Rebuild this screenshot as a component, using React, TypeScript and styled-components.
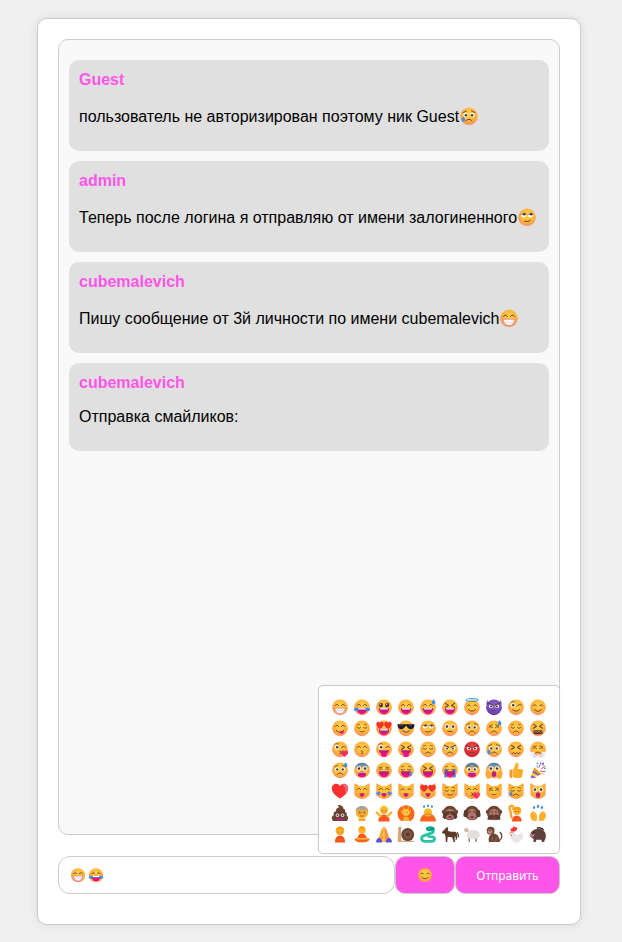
import React, { useId } from "react";
import styled, { createGlobalStyle } from "styled-components";

const Global = createGlobalStyle`
  html, body { margin: 0; padding: 0; background: #f0f0f0; }
  body { font-family: "Liberation Sans", Arial, sans-serif; }
`;

const Page = styled.div`
  box-sizing: border-box;
  width: 622px;
  height: 942px;
  padding: 18px 41px 17px 37px;
  background: #f0f0f0;
`;
const Card = styled.main`
  box-sizing: border-box;
  height: 907px;
  display: flex;
  flex-direction: column;
  padding: 20px 20px 30px;
  background: #fff;
  border: 1px solid #ccc;
  border-radius: 10px;
  box-shadow: 0 0 10px rgba(0, 0, 0, 0.1);
`;
const Chat = styled.section`
  box-sizing: border-box;
  flex: 1;
  display: flex;
  flex-direction: column;
  gap: 10px;
  padding: 20px 10px;
  background: #f9f9f9;
  border: 1px solid #ccc;
  border-radius: 10px;
`;
const Message = styled.article`
  padding: 11px 10px 9px;
  background: #e0e0e0;
  border-radius: 10px;
`;
const Author = styled.strong`
  display: block;
  font-size: 16px;
  line-height: 18px;
  color: #ff55e8;
`;
const Body = styled.p`
  margin: 16px 0;
  font-size: 16px;
  color: #000;
`;
const InlineEmoji = styled.span`
  display: inline-block;
  width: 20px;
  height: 21px;
  vertical-align: -4px;
  svg { display: block; margin-top: 1px; }
`;
const Composer = styled.form`
  position: relative;
  display: flex;
  height: 38px;
  margin: 21px 0 0;
`;
const Field = styled.div`
  box-sizing: border-box;
  width: 337px;
  display: flex;
  align-items: center;
  gap: 2px;
  padding: 0 11px;
  background: #fff;
  border: 1px solid #ccc;
  border-radius: 12px;
`;
const PinkButton = styled.button<{ $w: number }>`
  box-sizing: border-box;
  width: ${(p) => p.$w}px;
  height: 38px;
  display: flex;
  align-items: center;
  justify-content: center;
  padding: 0;
  background: #ff55e8;
  border: 1px solid #cfc6cd;
  border-radius: 10px;
  color: #fff;
  font-family: "Noto Sans", sans-serif;
  font-size: 12px;
`;
const Picker = styled.div`
  position: absolute;
  right: 0;
  bottom: calc(100% + 2px);
  box-sizing: border-box;
  width: 242px;
  height: 169px;
  display: grid;
  grid-template-columns: repeat(10, 22px);
  grid-auto-rows: 21.2px;
  padding: 10px;
  background: #fff;
  border: 1px solid #ccc;
  border-radius: 5px;
  place-items: center;
  box-shadow: 0 0 2px rgba(0, 0, 0, 0.08);
`;

const DK = "#53373A";
const S = (d: string, w = 1.6, c = DK) => (
  <path d={d} fill="none" stroke={c} strokeWidth={w} strokeLinecap="round" strokeLinejoin="round" />
);
const eyeO = (x: number, y: number, r = 3.6, px = 0, py = 0) => (
  <>
    <circle cx={x} cy={y} r={r} fill="#fff" />
    <circle cx={x + px} cy={y + py} r={r * 0.58} fill={DK} />
  </>
);
const heart = (x: number, y: number, s: number, c = "#F8312F") => (
  <path
    transform={`translate(${x} ${y}) scale(${s})`}
    d="M0 5C-3.5 2.6-5 1-5-1.3-5-3.2-3.6-4.5-2.2-4.5-1.2-4.5-.4-4-0-3 .4-4 1.2-4.5 2.2-4.5 3.6-4.5 5-3.2 5-1.3 5 1 3.5 2.6 0 5Z"
    fill={c}
  />
);
const drop = (x: number, y: number, s = 1) => (
  <path
    transform={`translate(${x} ${y}) scale(${s})`}
    d="M0-4C1.8-1.5 2.6-.4 2.6 1 2.6 2.5 1.4 3.5 0 3.5S-2.6 2.5-2.6 1C-2.6-.4-1.8-1.5 0-4Z"
    fill="#3F8CF0"
  />
);
const mouthShape = "M7 18H25C25.5 23.5 21 28 16 28S6.5 23.5 7 18Z";

const parts: Record<string, React.ReactNode> = {
  eHappy: <>{S("M7.5 13.5C8.5 10.5 12.5 10.5 13.5 13.5")}{S("M18.5 13.5C19.5 10.5 23.5 10.5 24.5 13.5")}</>,
  eSoft: <>{S("M7 14C8.5 11.5 12 11.5 13.5 14", 1.4)}{S("M18.5 14C20 11.5 23.5 11.5 25 14", 1.4)}</>,
  eBig: <>
    <ellipse cx="10.5" cy="12.5" rx="3.8" ry="4.2" fill={DK} /><ellipse cx="21.5" cy="12.5" rx="3.8" ry="4.2" fill={DK} />
    <circle cx="9.5" cy="11" r="1.2" fill="#fff" /><circle cx="20.5" cy="11" r="1.2" fill="#fff" />
  </>,
  eCross: <>{S("M8 9.5L13.5 13 8 16.5", 1.8)}{S("M24 9.5L18.5 13 24 16.5", 1.8)}</>,
  eDown: <>{S("M7.5 15C9 17 12 17 13.5 15", 1.4)}{S("M18.5 15C20 17 23 17 24.5 15", 1.4)}{S("M8 10.5L12 9.5", 1.1)}{S("M24 10.5L20 9.5", 1.1)}</>,
  eWink: <>{eyeO(10.5, 13, 4, 0.5, 0)}{S("M7 7.5C8.5 6 11 6 13 7", 1.2)}{S("M18.5 14C20 11 24 11 25.5 13", 1.6)}</>,
  eSide: <>
    {eyeO(10.5, 13, 3.8, 1, -1.5)}{eyeO(21.5, 13, 3.8, 1, -1.5)}
    {S("M6.5 11.5H14", 1.1)}{S("M17.5 11.5H25", 1.1)}
  </>,
  eStare: <>{eyeO(10.5, 13.5, 4, 0, 0)}{eyeO(21.5, 13.5, 4, 0, 0)}</>,
  eWorry: <>{eyeO(10.5, 14.5, 3.6, 0.6, 0.4)}{eyeO(21.5, 14.5, 3.6, -0.6, 0.4)}{S("M6.5 10.5L12 8", 1.3)}{S("M25.5 10.5L20 8", 1.3)}</>,
  eAngry: <>{eyeO(10.5, 14.5, 3.4, 0.4, 0.6)}{eyeO(21.5, 14.5, 3.4, -0.4, 0.6)}{S("M6.5 9.5L14 13", 1.8)}{S("M25.5 9.5L18 13", 1.8)}</>,
  eWeary: <>{S("M7.5 12.5L13 10.5", 1.4)}{S("M24.5 12.5L19 10.5", 1.4)}{S("M8 15C9.5 13.5 12 13.5 13.5 15", 1.3)}{S("M18.5 15C20 13.5 22.5 13.5 24 15", 1.3)}</>,
  mTeeth: <><path d={mouthShape} fill="#fff" stroke="#D15C9D" strokeWidth="1" />{S("M8 22.5H24", 0.7, "#B9B4BA")}{S("M12 18V27M16 18V28M20 18V27", 0.5, "#CFCBD0")}</>,
  mOpen: <><path d={mouthShape} fill="#BB1D80" /><path d="M9 18H23V19.5C23 20.2 22.4 20.5 22 20.5H10C9.6 20.5 9 20.2 9 19.5Z" fill="#fff" /><path d="M10 26C12 23.6 20 23.6 22 26 20.5 27.4 18.4 28 16 28S11.5 27.4 10 26Z" fill="#F70A8D" /></>,
  mOpenDeep: <><path d={mouthShape} fill="#BB1D80" /><path d="M10 26C12 23.6 20 23.6 22 26 20.5 27.4 18.4 28 16 28S11.5 27.4 10 26Z" fill="#F70A8D" /></>,
  mCat: <><path d="M11.5 20H20.5C20.5 24 18.4 26 16 26S11.5 24 11.5 20Z" fill="#BB1D80" /><path d="M13 24.5C14.5 23.4 17.5 23.4 19 24.5 17.5 26.3 14.5 26.3 13 24.5Z" fill="#F70A8D" /></>,
  mSmile: <>{S("M10 20.5C12 24.5 20 24.5 22 20.5")}</>,
  mSmall: <>{S("M12 21.5C14 23.5 18 23.5 20 21.5", 1.4)}</>,
  mSmirk: <>{S("M12 22.5C15 24 20 23.5 22 20.5", 1.5)}</>,
  mFlat: <>{S("M12 22H20", 1.6)}</>,
  mFrown: <>{S("M11 24C13 20.5 19 20.5 21 24", 1.5)}</>,
  mYum: <>{S("M9 19.5C11 24.5 20 25 23 19.5")}<path d="M16 22.5C18 21.5 21 21 22.5 21.5 23.5 24 21.5 26.5 19.5 26.5 17.5 26.5 16 24.5 16 22.5Z" fill="#F70A8D" /></>,
  mTongue: <><path d="M7 18H25C25 22 21 25 16 25S7 22 7 18Z" fill="#BB1D80" /><path d="M11 22H21V26C21 28.5 19 30 16 30S11 28.5 11 26Z" fill="#F70A8D" /></>,
  mKiss: <>{S("M14.5 19.5C17.5 19 18 21.5 16 22 18 22.5 17.5 25 14.5 24.5", 1.5)}</>,
  mGrit: <><path d="M8 20H24V25C24 26 23 27 22 27H10C9 27 8 26 8 25Z" fill={DK} />{S("M9.5 23.5L12.3 21.5 15 24 17.8 21.5 20.5 24 23 21.5", 1.1, "#FFB02E")}</>,
  mWavy: <>{S("M9 25L12 22 14.5 25 17.5 22 20 25 23 22", 1.5)}</>,
  mGasp: <><path d="M9 25C9 20.5 12 18.5 16 18.5S23 20.5 23 25C23 27.5 20 28.5 16 28.5S9 27.5 9 25Z" fill="#BB1D80" /><path d="M11 19.5H21V20.5H11Z" fill="#fff" /><path d="M11 26.5C13 24.5 19 24.5 21 26.5 19 28.5 13 28.5 11 26.5Z" fill="#F70A8D" /></>,
  mO: <><ellipse cx="16" cy="23" rx="4" ry="5" fill="#BB1D80" /></>,
  xSweat: drop(26, 7, 1.2),
  xDrop: drop(7, 21, 1.1),
  xTearSide: drop(24.5, 23, 1),
  xTears: <>
    <path d="M1 20.5C3 17.5 7 16.5 10 18L8 23C6 24 2.5 23.5 1 20.5Z" fill="#3F8CF0" />
    <path d="M31 20.5C29 17.5 25 16.5 22 18L24 23C26 24 29.5 23.5 31 20.5Z" fill="#3F8CF0" />
  </>,
  xHalo: <ellipse cx="16" cy="3.5" rx="10.5" ry="2.6" fill="none" stroke="#2C9CE8" strokeWidth="1.8" />,
  xHeartEyes: <>{heart(9, 11, 1.35)}{heart(23, 11, 1.35)}</>,
  xShades: <>
    <path d="M1 9.5H31V11.5C31 15.5 27.5 18 24 18 20.5 18 18 15.5 17.5 13H14.5C14 15.5 11.5 18 8 18 4.5 18 1 15.5 1 11.5Z" fill="#1F1A2E" />
    <path d="M4 11.5C5.5 10.5 8 10.5 9.5 11.5M21 11.5C22.5 10.5 25 10.5 26.5 11.5" stroke="#6D6A90" strokeWidth="1.2" fill="none" />
  </>,
  xHeartKiss: heart(24, 24, 1.25, "#F92F60"),
  xSteam: <>
    <circle cx="6" cy="25" r="4" fill="#F3EEF8" /><circle cx="26" cy="25" r="4" fill="#F3EEF8" />
    <circle cx="10" cy="28" r="3.5" fill="#E8D6F5" /><circle cx="22" cy="28" r="3.5" fill="#E8D6F5" />
    <circle cx="16" cy="29" r="2.6" fill="#F3EEF8" />
  </>,
  xStreams: <>
    <path d="M6 15H12V27C10 29 8 30 6 29.5Z" fill="#3F8CF0" /><path d="M26 15H20V27C22 29 24 30 26 29.5Z" fill="#3F8CF0" />
  </>,
  xHands: <>
    <path d="M1 21C1 18.5 4 18.5 5 20L9 25V31H4C2 29 1 24 1 21Z" fill="#FFB02E" stroke="#E8832A" strokeWidth=".5" />
    <path d="M31 21C31 18.5 28 18.5 27 20L23 25V31H28C30 29 31 24 31 21Z" fill="#FFB02E" stroke="#E8832A" strokeWidth=".5" />
  </>,
  wisk: <>{S("M1.5 20.5L6 21.5M1.5 24.5L6 24", 0.9, "#F8843A")}{S("M30.5 20.5L26 21.5M30.5 24.5L26 24", 0.9, "#F8843A")}</>,
};

type Spec = { base?: "face" | "red" | "purple" | "cat" | "blue"; p?: string[]; art?: React.ReactNode };
const face = (...p: string[]): Spec => ({ base: "face", p });
const blue = (...p: string[]): Spec => ({ base: "blue", p });
const cat = (...p: string[]): Spec => ({ base: "cat", p: [...p, "wisk"] });

const Person = ({ skin = "#FFB02E", shirt = "#F8541E", hair = "#F59F00" }) => (
  <>
    <path d="M7 31C7 22 11 19 16 19S25 22 25 31Z" fill={shirt} />
    <circle cx="16" cy="11" r="7.5" fill={skin} />
    <path d="M8.5 11C8.5 4 12.5 2.5 16 2.5S23.5 4 23.5 11C21 7.5 18 7 16 7S11 7.5 8.5 11Z" fill={hair} />
    <circle cx="13.5" cy="12.5" r=".9" fill={DK} /><circle cx="18.5" cy="12.5" r=".9" fill={DK} />
  </>
);
const Monkey = ({ cover }: { cover: "eyes" | "ears" | "mouth" }) => (
  <>
    <circle cx="5" cy="14" r="3.6" fill="#6D4534" /><circle cx="27" cy="14" r="3.6" fill="#6D4534" />
    <ellipse cx="16" cy="16" rx="12.5" ry="13" fill="#6D4534" />
    <ellipse cx="16" cy="18" rx="8.5" ry="9.5" fill="#B0756A" />
    <circle cx="12.5" cy="14" r="1.4" fill={DK} /><circle cx="19.5" cy="14" r="1.4" fill={DK} />
    <ellipse cx="16" cy="23" rx="3.5" ry="1.5" fill="#7D2B5E" />
    {cover === "eyes" && <><path d="M3 24C3 16 8 12 15.5 13V18C12 18 8 22 7 27Z" fill="#5D3A2E" /><path d="M29 24C29 16 24 12 16.5 13V18C20 18 24 22 25 27Z" fill="#5D3A2E" /></>}
    {cover === "ears" && <><path d="M1 22C0 16 3 9 9 10 11 14 9 20 6 24Z" fill="#5D3A2E" /><path d="M31 22C32 16 29 9 23 10 21 14 23 20 26 24Z" fill="#5D3A2E" /></>}
    {cover === "mouth" && <><path d="M4 27C5 21 10 18 15.5 19V26C12 28 7 29 4 27Z" fill="#5D3A2E" /><path d="M28 27C27 21 22 18 16.5 19V26C20 28 25 29 28 27Z" fill="#5D3A2E" /></>}
  </>
);

const thumb = (
  <>
    <path d="M13 30H23C25 30 26.5 29 27 27L28.5 18C28.8 15.5 27.2 14 25 14H19.5L20.5 6C20.8 2.5 16.5 1.2 15.2 4.5L12.5 12C12 13.5 11 14.5 10 15.5V27C11 29 12 30 13 30Z" fill="#FFB02E" />
    <path d="M19 18H28M18.5 22.5H27.5M18.5 26.5H26.5" stroke="#F59B1E" strokeWidth=".8" />
    <rect x="4.5" y="15" width="5" height="15" rx="1.8" fill="#F8953A" />
  </>
);
const popper = (
  <>
    <path d="M3 30L9.5 11 22 23Z" fill="#F59F00" />
    <path d="M4.6 25.5L13 29 8 30.5 3 30ZM7.5 17L20 24 16 26 6 21Z" fill="#8D65C5" />
    <path d="M6 21L16 26 13 28 4.6 25.5Z" fill="#FFD23C" />
    <circle cx="24" cy="5" r="1.7" fill="#F92F60" /><circle cx="15" cy="4" r="1.5" fill="#00A6ED" /><circle cx="28" cy="13" r="1.6" fill="#00D26A" />
    <path d="M18 11L21 3M22 14L29 9M20 18L29 19" stroke="#F92F60" strokeWidth="1.5" strokeLinecap="round" />
    <path d="M14 8L16 12M25 9L26 3" stroke="#00A6ED" strokeWidth="1.4" strokeLinecap="round" />
    <path d="M22 22L27 24" stroke="#FFB02E" strokeWidth="1.5" strokeLinecap="round" />
  </>
);
const bigHeart = (
  <>
    <path d="M16 29.5C6 23 1.5 17.5 1.5 11 1.5 6 5.5 3 9.5 3 12.5 3 15 4.8 16 7.5 17 4.8 19.5 3 22.5 3 26.5 3 30.5 6 30.5 11 30.5 17.5 26 23 16 29.5Z" fill="#F8312F" />
    <path d="M22.5 3C26.5 3 30.5 6 30.5 11 30.5 15 28.5 19 25 22.5 27 15 25 7 19 5 20 3.8 21 3 22.5 3Z" fill="#FF6D8D" opacity=".8" />
  </>
);
const poop = (
  <>
    <path d="M4 30C0 27 1 21 5 20 3.5 16 6 13 9 13 8 9 11 6 14 6 14 4 13 3 12 2 17 1 22 4 22 8.5 24.5 9 26 11 25 14 28 15 29 18 27.5 20.5 31 22 31.5 27 28 30Z" fill="#6D4534" />
    <path d="M9 13C13 16 20 16 25 14M5 20C10 24 21 24 27.5 20.5" stroke="#4E3227" strokeWidth="1" fill="none" />
    {eyeO(11.5, 20, 3, 0, 0)}{eyeO(20.5, 20, 3, 0, 0)}
    <path d="M10 25.5H22C21 29 18.5 29.5 16 29.5S11 29 10 25.5Z" fill="#BB1D80" />
  </>
);
const elder = (
  <>
    <circle cx="16" cy="15" r="11" fill="#FFB02E" />
    <path d="M5 14C4 8 9 3.5 16 3.5S28 8 27 14C25 12 25 10 23 9 18 11 13 11 9 9 7 10 7 12 5 14Z" fill="#A9A29A" />
    <circle cx="12" cy="15" r="2.6" fill="none" stroke="#7C7672" strokeWidth=".9" /><circle cx="20" cy="15" r="2.6" fill="none" stroke="#7C7672" strokeWidth=".9" />
    <circle cx="12" cy="15" r="1" fill={DK} /><circle cx="20" cy="15" r="1" fill={DK} />
    {S("M13 21C15 22 17 22 19 21", 1)}
    <path d="M10 26H22V30H10Z" fill="#F59F00" />
  </>
);
const gesture = (
  <>
    <path d="M6 31C6 23 10 19 16 19S26 23 26 31Z" fill="#F8541E" />
    <path d="M3 15L10 22M29 15L22 22" stroke="#FFB02E" strokeWidth="4" strokeLinecap="round" />
    <circle cx="16" cy="11" r="7" fill="#FFB02E" />
    <path d="M9 10C9 5 12 3 16 3S23 5 23 10C21 7 11 7 9 10Z" fill="#F5C518" />
    <circle cx="13.5" cy="12" r=".8" fill={DK} /><circle cx="18.5" cy="12" r=".8" fill={DK} />
  </>
);
const flameHair = (
  <>
    <path d="M16 2C24 2 31 8 31 17 31 24 27 29 24 30H8C5 29 1 24 1 17 1 8 8 2 16 2Z" fill="#F8651E" />
    <path d="M11 5L13 12M21 5L19 12M8 12L11 18M24 12L21 18" stroke="#FFB02E" strokeWidth="2.5" strokeLinecap="round" />
    <circle cx="16" cy="15" r="6" fill="#FFC83D" />
    <circle cx="14" cy="15" r=".8" fill={DK} /><circle cx="18" cy="15" r=".8" fill={DK} />
    <path d="M10 30C10 25 13 22 16 22S22 25 22 30Z" fill="#FFB02E" />
  </>
);
const bowing = (
  <>
    <path d="M2 31C2 22 8 17 16 17S30 22 30 31Z" fill="#F8651E" />
    <circle cx="16" cy="15" r="7" fill="#FFB02E" />
    <path d="M9 14C10 9.5 13 8 16 8S22 9.5 23 14C20 12 12 12 9 14Z" fill="#F5C518" />
    {S("M12 18C13 19 14 19 15 18M17 18C18 19 19 19 20 18", .9)}
    {drop(9, 4, .7)}{drop(16, 3, .7)}{drop(23, 4, .7)}
  </>
);
const raising = (
  <>
    <path d="M9 31C9 24 12 21 17 21S26 24 26 31Z" fill="#F8541E" />
    <path d="M8 24L6 12M6 11C3 8 4 4 8 3 11 3 13 6 11 9" stroke="#FF9F2E" strokeWidth="4" fill="none" strokeLinecap="round" />
    <circle cx="18" cy="12.5" r="7" fill="#FFB02E" />
    <path d="M11 12C11 7 14 5 18 5S25 7 25 12C23 9 13 9 11 12Z" fill="#F59F00" />
    <circle cx="15.5" cy="13.5" r=".9" fill={DK} /><circle cx="20.5" cy="13.5" r=".9" fill={DK} />
  </>
);
const raisedHands = (
  <>
    <path d="M2 20C2 14 7 12 10 14L14 19V30H8C4 28 2 25 2 20Z" fill="#FFB02E" />
    <path d="M30 20C30 14 25 12 22 14L18 19V30H24C28 28 30 25 30 20Z" fill="#FFB02E" />
    {drop(9, 6, .85)}{drop(16, 4, .85)}{drop(23, 6, .85)}
  </>
);
const sitting = (
  <>
    <circle cx="16" cy="9" r="6.5" fill="#FFB02E" />
    <path d="M10.5 8C10.5 3.5 13 2 16 2S21.5 3.5 21.5 8C19 6.5 13 6.5 10.5 8Z" fill="#F59F00" />
    <path d="M8 24C8 18 12 15.5 16 15.5S24 18 24 24Z" fill="#F8541E" />
    <path d="M3 25C3 23 7 22 16 22S29 23 29 25C29 29 24 31 16 31S3 29 3 25Z" fill="#F8651E" />
    <path d="M6 24.5H26" stroke="#FFC83D" strokeWidth="2.2" />
  </>
);
const praying = (
  <>
    <path d="M15.5 2C11 7 9 14 8 20L5 24V30H15.5Z" fill="#FFA72E" />
    <path d="M16.5 2C21 7 23 14 24 20L27 24V30H16.5Z" fill="#F9953C" />
    <path d="M2 31C2 26 4 23 7.5 23 10 23 12.5 26 12.5 31ZM30 31C30 26 28 23 24.5 23 22 23 19.5 26 19.5 31Z" fill="#5C4FD6" />
  </>
);
const snail = (
  <>
    <path d="M1 30H30C31 30 31 28 30 28H8L7 8C7 4 2 4 2 8Z" fill="#D9A778" />
    <rect x="3" y="3" width="1.6" height="5" fill="#B98B60" /><rect x="6" y="3" width="1.6" height="5" fill="#B98B60" />
    <circle cx="19" cy="17" r="11.5" fill="#6D4534" />
    <circle cx="19" cy="17" r="7.5" fill="#7D5747" /><circle cx="19" cy="17" r="3.5" fill="#5D3B2E" />
  </>
);
const snake = (
  <>
    <path d="M22 7C26 8 27 12 23 14L9 19C3 21 3 28 10 29L23 29C29 28 29 22 24 21L17 20" fill="none" stroke="#2CC3A4" strokeWidth="5" strokeLinecap="round" />
    <path d="M12 7C12 3.5 16 2 20 2S28 3.5 28 7 24 11 20 11 12 10 12 7Z" fill="#00A88A" />
    <circle cx="23" cy="5.5" r="1" fill={DK} />
  </>
);
const horse = (
  <>
    <path d="M4 10L8 6 11 3 13 7 12 10C17 12 22 12 25 12 28 13 29 16 29 20L28 26 26 26 26 20 24 22 25 30 22.5 30 20 22C17 22 14 22 12 21L11 30H8.5L8 20 6.5 15 3.5 15.5 1.5 13Z" fill="#5B3A2A" />
    <path d="M29 13C31 15 31 19 30.5 22" stroke="#362017" strokeWidth="1.8" fill="none" />
  </>
);
const sheep = (
  <>
    <rect x="10" y="22" width="2.4" height="8" fill="#7F7672" /><rect x="22" y="22" width="2.4" height="8" fill="#7F7672" />
    <path d="M8 14C7 11 11 9 13 10 15 8 20 8 22 10 25 9 30 12 29 15 31 17 30 22 27 23 25 25 20 25 17 24 14 25 9 24 8 22 6 20 6 16 8 14Z" fill="#E4DFDC" />
    <ellipse cx="6" cy="9" rx="4" ry="3.5" fill="#CFB397" />
    <path d="M3 7C3 3 9 3 10 7Z" fill="#E4DFDC" />
  </>
);
const monkey = (
  <>
    <path d="M25 28C31 25 31 16 27 13" stroke="#6D4534" strokeWidth="2.5" fill="none" strokeLinecap="round" />
    <path d="M7 30C5 22 9 15 15 15S26 20 26 30Z" fill="#6D4534" />
    <circle cx="10" cy="10" r="7" fill="#6D4534" />
    <ellipse cx="9" cy="11.5" rx="4.5" ry="4" fill="#C28A77" />
    <circle cx="7.5" cy="10" r=".9" fill={DK} /><circle cx="10.5" cy="10" r=".9" fill={DK} />
    <path d="M13 28V21M19 30L20 22" stroke="#A47262" strokeWidth="1.4" />
  </>
);
const rooster = (
  <>
    <path d="M4 14C8 9 13 9 14 14 16 20 22 17 26 13 30 17 29 27 20 31H14C8 28 6 21 6 17Z" fill="#E9E4E8" />
    <path d="M7 11C5 6 8 5 10 6 10 2 14 2 15 5 17 3 20 5 17 9 15 12 12 12 7 11Z" fill="#F8312F" />
    <path d="M3 14L6.5 12V17Z" fill="#FFB02E" />
    <path d="M6 17C6 20 8 20 9 18" fill="#F8312F" />
    <circle cx="9" cy="13" r=".9" fill={DK} />
  </>
);
const boar = (
  <>
    <path d="M2 17C5 9 10 7 17 7 24 7 30 11 30 19 30 25 27 27 27 30H23L22 26H13L12 30H8V24C5 24 2 21 2 17Z" fill="#5F403A" />
    <path d="M14 6C17 4 23 5 26 9" stroke="#3F2926" strokeWidth="2.5" fill="none" />
    <ellipse cx="3.5" cy="18" rx="2.5" ry="3" fill="#B98B80" />
    <path d="M6 21L9 17" stroke="#F3EEF0" strokeWidth="1.4" strokeLinecap="round" />
    <circle cx="9" cy="13.5" r="1" fill="#170F0D" />
  </>
);

const E = {
  grin: face("eHappy", "mTeeth"),
  joy: face("eHappy", "mOpen", "xTears"),
  smiley: face("eBig", "mOpen"),
  smile: face("eHappy", "mOpen"),
  sweatSmile: face("eHappy", "mOpen", "xSweat"),
  laugh: face("eCross", "mOpen"),
  halo: face("eSoft", "mSmile", "xHalo"),
  devil: { base: "purple", p: ["eAngry", "mSmall"] } as Spec,
  wink: face("eWink", "mSmile"),
  blush: face("eSoft", "mSmile"),
  yum: face("eHappy", "mYum"),
  relieved: face("eDown", "mSmall"),
  heartEyes: face("mOpen", "xHeartEyes"),
  cool: face("mSmile", "xShades"),
  smirk: face("eSide", "mSmirk"),
  neutral: face("eStare", "mFlat"),
  worried: face("eWorry", "mFrown"),
  downcast: face("eWeary", "mFrown", "xSweat"),
  pensive: face("eDown", "mFrown"),
  grit: face("eCross", "mGrit"),
  kissH: face("eWink", "mKiss", "xHeartKiss"),
  kiss: face("eHappy", "mKiss"),
  tongueW: face("eWink", "mTongue"),
  tongueX: face("eCross", "mTongue"),
  sad: face("eDown", "mFrown"),
  angry: face("eAngry", "mFrown"),
  rage: { base: "red", p: ["eAngry", "mFrown"] } as Spec,
  tearW: face("eWorry", "mFrown", "xDrop"),
  conf: face("eCross", "mWavy"),
  steam: face("eWeary", "mFrown", "xSteam"),
  anxious: face("eWorry", "mFrown", "xSweat"),
  fear: blue("eStare", "mGasp"),
  weary: face("eWeary", "mOpenDeep"),
  sleepy: face("eDown", "mOpenDeep", "xTearSide"),
  tired: face("eCross", "mOpenDeep"),
  cry: face("xStreams", "eDown", "mOpenDeep"),
  cold: blue("eWorry", "mGasp"),
  scream: blue("eStare", "mO", "xHands"),
  catGrin: cat("eHappy", "mCat"),
  catJoy: cat("eHappy", "mCat", "xTears"),
  catSmile: cat("eSoft", "mCat"),
  catHeart: cat("mCat", "xHeartEyes"),
  catSmirk: cat("eDown", "mSmirk"),
  catKiss: cat("eHappy", "mKiss", "xHeartKiss"),
  catPout: cat("eWeary", "mSmall"),
  catCry: cat("eDown", "mFrown", "xDrop"),
  catScream: cat("eStare", "mO"),
};

const grid: Spec[] = [
  E.grin, E.joy, E.smiley, E.smile, E.sweatSmile, E.laugh, E.halo, E.devil, E.wink, E.blush,
  E.yum, E.relieved, E.heartEyes, E.cool, E.smirk, E.neutral, E.worried, E.downcast, E.pensive, E.grit,
  E.kissH, E.kiss, E.tongueW, E.tongueX, E.sad, E.angry, E.rage, E.tearW, E.conf, E.steam,
  E.anxious, E.fear, E.weary, E.sleepy, E.tired, E.cry, E.cold, E.scream, { art: thumb }, { art: popper },
  { art: bigHeart }, E.catGrin, E.catJoy, E.catSmile, E.catHeart, E.catSmirk, E.catKiss, E.catPout, E.catCry, E.catScream,
  { art: poop }, { art: elder }, { art: gesture }, { art: flameHair }, { art: bowing },
  { art: <Monkey cover="eyes" /> }, { art: <Monkey cover="ears" /> }, { art: <Monkey cover="mouth" /> }, { art: raising }, { art: raisedHands },
  { art: <Person /> }, { art: sitting }, { art: praying }, { art: snail }, { art: snake }, { art: horse }, { art: sheep }, { art: monkey }, { art: rooster }, { art: boar },
];

const Emoji = ({ spec, size }: { spec: Spec; size: number }) => {
  const id = useId();
  const stops: Record<string, string[]> = {
    face: ["#FFD04A", "#FFBC3A", "#FC9F48", "#F98A80"],
    blue: ["#FFD04A", "#FFBC3A", "#FC9F48", "#F98A80"],
    cat: ["#FFCB42", "#FFB832", "#FCA53A", "#F89A4A"],
    red: ["#F8474A", "#E8383C", "#D8282F", "#C02438"],
    purple: ["#8D65C5", "#7B4FC0", "#6A3FB0", "#5A2FA0"],
  };
  const s = spec.base ? stops[spec.base] : null;
  return (
    <svg width={size} height={size} viewBox="0 0 32 32" aria-hidden>
      {s && (
        <defs>
          <radialGradient id={id} cx="52%" cy="40%" r="60%">
            <stop offset="0%" stopColor={s[0]} />
            <stop offset="55%" stopColor={s[1]} />
            <stop offset="85%" stopColor={s[2]} />
            <stop offset="100%" stopColor={s[3]} />
          </radialGradient>
          <linearGradient id={id + "b"} x1="0" y1="0" x2="0" y2="1">
            <stop offset="0%" stopColor="#1E78E8" />
            <stop offset="100%" stopColor="#1E78E8" stopOpacity="0" />
          </linearGradient>
        </defs>
      )}
      {spec.base === "cat" && (
        <path d="M3 2L12 7H20L29 2C30 8 30 12 29.5 16 29.5 25 24 30 16 30S2.5 25 2.5 16C2 12 2 8 3 2Z" fill={`url(#${id})`} />
      )}
      {spec.base === "purple" && <path d="M4 2C4 6 6 8 9 9H23C26 8 28 6 28 2L30 12 23 9H9L2 12Z" fill="#7B4FC0" />}
      {spec.base && spec.base !== "cat" && <circle cx="16" cy="16.5" r="14" fill={`url(#${id})`} />}
      {spec.base === "blue" && <path d="M2.5 14A14 14 0 0 1 29.5 14Z" fill={`url(#${id}b)`} />}
      {spec.p?.map((k) => <React.Fragment key={k}>{parts[k]}</React.Fragment>)}
      {spec.art}
    </svg>
  );
};

const messages: { author: string; text: string; emoji?: Spec }[] = [
  { author: "Guest", text: "пользователь не авторизирован поэтому ник Guest", emoji: E.tearW },
  { author: "admin", text: "Теперь после логина я отправляю от имени залогиненного", emoji: E.smirk },
  { author: "cubemalevich", text: "Пишу сообщение от 3й личности по имени cubemalevich", emoji: E.grin },
  { author: "cubemalevich", text: "Отправка смайликов:" },
];

export default function App() {
  return (
    <Page>
      <Global />
      <Card>
        <Chat>
          {messages.map((m, i) => (
            <Message key={i}>
              <Author>{m.author}</Author>
              <Body>
                {m.text}
                {m.emoji && (
                  <InlineEmoji>
                    <Emoji spec={m.emoji} size={20} />
                  </InlineEmoji>
                )}
              </Body>
            </Message>
          ))}
        </Chat>
        <Composer onSubmit={(e) => e.preventDefault()}>
          <Field>
            <Emoji spec={E.grin} size={16} />
            <Emoji spec={E.joy} size={16} />
          </Field>
          <PinkButton type="button" $w={60}>
            <Emoji spec={E.blush} size={16} />
          </PinkButton>
          <PinkButton type="submit" $w={105}>Отправить</PinkButton>
          <Picker>
            {grid.map((s, i) => (
              <Emoji key={i} spec={s} size={18} />
            ))}
          </Picker>
        </Composer>
      </Card>
    </Page>
  );
}
